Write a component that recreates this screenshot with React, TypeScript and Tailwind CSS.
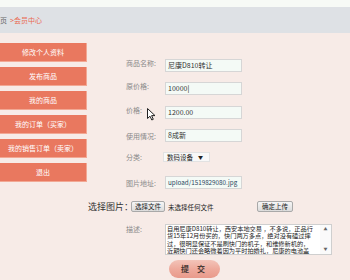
import React from "react";

const menu = ["修改个人资料", "发布商品", "我的商品", "我的订单（买家）", "我的销售订单（卖家）", "退出"];

function Field({ label, value, top, align = "items-center" }: { label: string; value: React.ReactNode; top: string; align?: string }) {
  return (
    <div className={`flex ${align} pl-[38px] ${top}`}>
      <div className="w-[39px] text-[7px] leading-[8px] text-[#8a8a8a]">{label}</div>
      <div className="w-[77px] h-[13px] border border-[#d6d6d6] bg-[#f4faf6] text-[7px] leading-[11px] text-[#333] pl-[2px] whitespace-nowrap overflow-hidden">
        {value}
      </div>
    </div>
  );
}

export default function App() {
  return (
    <div className="relative w-[350px] h-[280px] overflow-hidden bg-[#f7ebe7] font-['Noto_Sans_CJK_SC','Noto_Sans',sans-serif]">
      <div className="h-[7px] bg-[#f7faf6]" />
      <div className="h-[26px] bg-[#dee1e5] flex items-center text-[7px] leading-[8px]">
        <span className="ml-[-7px] text-[#666]">首页</span>
        <span className="ml-[3px] text-[#ea6a52]">&gt;会员中心</span>
      </div>
      <div className="flex">
        <div className="w-[87px] pt-[10px] flex flex-col gap-[5px]">
          {menu.map((m) => (
            <div
              key={m}
              className="h-[19px] bg-[#e9785f] border-r border-b border-[#f2a894] flex items-center justify-center text-white text-[7px] leading-[8px] whitespace-nowrap"
            >
              {m}
            </div>
          ))}
        </div>
        <div className="ml-[1px] w-[262px] flex flex-col">
          <Field top="mt-[26px]" align="items-start" label="商品名称:" value="尼康D810转让" />
          <Field top="mt-[10px]" align="items-start" label="原价格:" value={<span>10000<span className="text-black">|</span></span>} />
          <Field top="mt-[11px]" align="items-start" label="价格:" value="1200.00" />
          <Field top="mt-[10px]" label="使用情况:" value="8成新" />
          <div className="flex items-center pl-[38px] mt-[10px]">
            <div className="w-[37px] text-[7px] leading-[8px] text-[#8a8a8a]">分类:</div>
            <div className="w-[47px] h-[10px] bg-[#f8f8f8] border border-[#e2e2e2] flex items-center text-[6.5px] leading-[8px] text-[#222] pl-[3px] gap-[5px]">
              <span>数码设备</span>
              <span className="text-[5px]">▼</span>
            </div>
          </div>
          <Field top="mt-[14px]" label="图片地址:" value={<span className="text-[#2b4660] text-[6.3px]">upload/1519829080.jpg</span>} />
          <div className="flex items-center mt-[12px] h-[11px]">
            <div className="w-[43px] text-[9px] leading-[11px] text-[#333] whitespace-nowrap">选择图片：</div>
            <div className="w-[34px] h-[11px] bg-gradient-to-b from-[#f6f6f6] to-[#dcdcdc] border border-[#a9a9a9] rounded-[2px] text-[6.5px] leading-[9px] text-[#222] flex items-center justify-center">
              选择文件
            </div>
            <div className="ml-[3px] w-[89px] text-[6.5px] leading-[8px] text-[#222]">未选择任何文件</div>
            <div className="w-[36px] h-[11px] bg-gradient-to-b from-[#f6f6f6] to-[#dcdcdc] border border-[#a9a9a9] rounded-[2px] text-[6.5px] leading-[9px] text-[#222] flex items-center justify-center">
              确定上传
            </div>
          </div>
          <div className="flex items-start pl-[38px] mt-[12px]">
            <div className="w-[39px] text-[7px] leading-[8px] text-[#8a8a8a] mt-[1px]">描述:</div>
            <div className="relative w-[167px] h-[31px] border border-[#cfcfcf] bg-white overflow-hidden flex">
              <div className="flex-1 pl-[1px] pt-[0px] text-[6.2px] leading-[7.4px] text-[#1a1a1a] whitespace-nowrap overflow-hidden">
                <div>自用尼康D810转让，西安本地交易 ，不多说，正品行</div>
                <div>货15年12月份买的，快门两万多点，绝对没有磕过摔</div>
                <div>过，很明显保证不是刷快门的机子，和维修新机的，</div>
                <div>近期快门还会略微着因为平时拍婚礼，尼康的电池盖</div>
              </div>
              <div className="w-[11px] shrink-0 bg-[#fafafa] flex flex-col items-center justify-between py-[2px] text-[4px] leading-[5px] text-[#666]">
                <span>▲</span>
                <span>▼</span>
              </div>
            </div>
          </div>
          <div className="ml-[81px] mt-[5px] w-[51px] h-[18px] rounded-full bg-gradient-to-b from-[#f3c4b9] via-[#eeaa9c] to-[#e99a8b] flex items-center justify-center text-[8px] leading-[10px] font-bold text-[#4a3a36] tracking-[3px]">
            提 交
          </div>
        </div>
      </div>
      <svg className="absolute left-[147px] top-[108px]" width="9" height="13" viewBox="0 0 9 13">
        <path d="M0.5 0.5 L0.5 10.5 L3 8.2 L4.8 12 L6.3 11.3 L4.6 7.6 L8 7.6 Z" fill="#fff" stroke="#222" strokeWidth="1" strokeLinejoin="round" />
      </svg>
    </div>
  );
}
